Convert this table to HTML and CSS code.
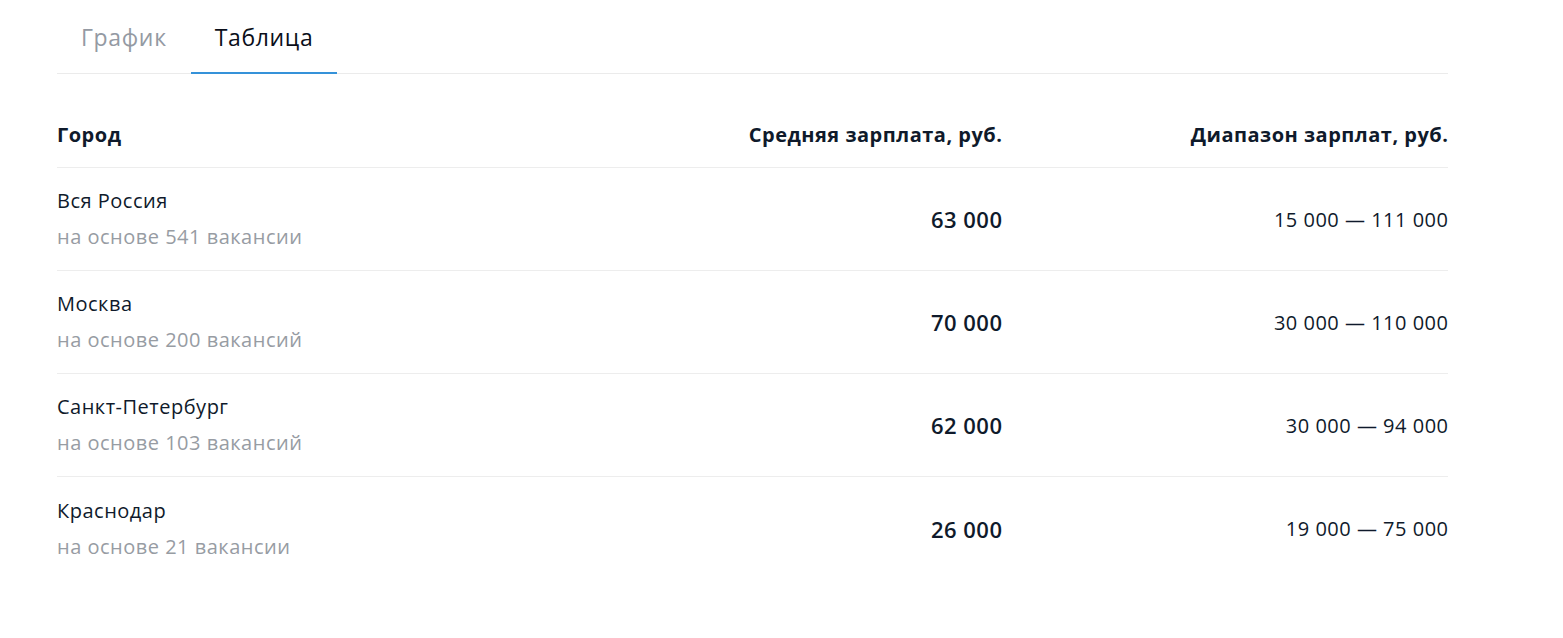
FILE: index.html
```html
<!DOCTYPE html>
<html lang="ru">
<head>
<meta charset="utf-8">
<link rel="stylesheet" href="styles.css">
</head>
<body>
<div class="wrap">
  <div class="tabs">
    <div class="tab">График</div>
    <div class="tab active">Таблица</div>
  </div>
  <div class="table">
    <div class="row head">
      <div class="c1">Город</div>
      <div class="c2">Средняя зарплата, руб.</div>
      <div class="c3">Диапазон зарплат, руб.</div>
    </div>
    <div class="row">
      <div class="c1"><div class="city">Вся Россия</div><div class="sub">на основе 541 вакансии</div></div>
      <div class="c2 avg">63 000</div>
      <div class="c3 range">15 000 — 111 000</div>
    </div>
    <div class="row">
      <div class="c1"><div class="city">Москва</div><div class="sub">на основе 200 вакансий</div></div>
      <div class="c2 avg">70 000</div>
      <div class="c3 range">30 000 — 110 000</div>
    </div>
    <div class="row">
      <div class="c1"><div class="city">Санкт-Петербург</div><div class="sub">на основе 103 вакансий</div></div>
      <div class="c2 avg">62 000</div>
      <div class="c3 range">30 000 — 94 000</div>
    </div>
    <div class="row last">
      <div class="c1"><div class="city">Краснодар</div><div class="sub">на основе 21 вакансии</div></div>
      <div class="c2 avg">26 000</div>
      <div class="c3 range">19 000 — 75 000</div>
    </div>
  </div>
</div>
</body>
</html>
```

FILE: styles.css
```css
* { box-sizing: border-box; }
body {
  margin: 0;
  background: #fff;
  font-family: "Open Sans", "Noto Sans", sans-serif;
  color: #0f1a2b;
  letter-spacing: 0.5px;
}
.wrap {
  width: 1391px;
  margin-left: 57px;
}
.tabs {
  display: flex;
  height: 74px;
  border-bottom: 1px solid #ebebeb;
}
.tab {
  padding: 25px 24px 0;
  font-size: 23px;
  line-height: 24px;
  letter-spacing: 0.65px;
  color: #949aa3;
}
.tab.active {
  color: #0b0f1a;
  border-bottom: 2px solid #3592d9;
  margin-bottom: -1px;
}
.table {
  margin-top: 28px;
}
.row {
  display: grid;
  grid-template-columns: 1fr 400px 446px;
  align-items: center;
  border-bottom: 1px solid #ededed;
  height: 103px;
}
.row.head {
  height: 66px;
  font-weight: 700;
  font-size: 20px;
}
.row.last { border-bottom: none; }
.c2, .c3 {
  text-align: right;
  margin-right: -0.5px;
}
.city {
  font-size: 20px;
  line-height: 36px;
}
.sub {
  font-size: 20px;
  line-height: 36px;
  color: #979ca3;
}
.avg {
  font-size: 22px;
  font-weight: 600;
}
.range {
  font-size: 20px;
}
```
